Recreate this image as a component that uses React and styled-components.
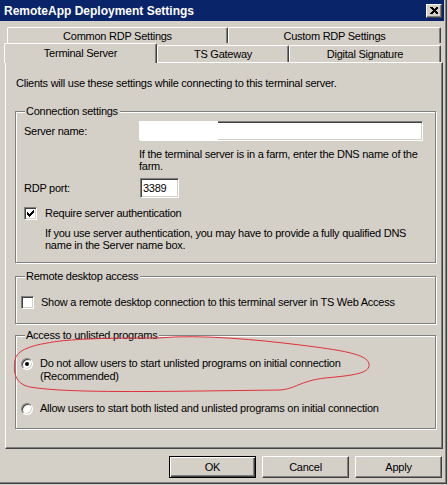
import styled, { createGlobalStyle } from 'styled-components';

const GlobalStyle = createGlobalStyle`
  html, body {
    margin: 0;
    background: #d4d0c8;
  }
  body {
    font-family: "Liberation Sans", Arial, sans-serif;
    font-size: 11px;
    letter-spacing: -0.25px;
    color: #000;
  }
`

const Window = styled.div`
  position: relative;
  box-sizing: border-box;
  width: 447px;
  height: 484px;
  background: #d4d0c8;
  border-right: 1px solid #404040;
  border-bottom: 1px solid #404040;
  box-shadow: inset -1px -1px #808080;
  display: flex;
  flex-direction: column;
`

const TitleBar = styled.div`
  width: 444px;
  height: 21px;
  box-sizing: border-box;
  background: #0a246a;
  display: flex;
  align-items: center;
  justify-content: space-between;
  padding: 0 2px 0 4px;
`

const Title = styled.span`
  color: #fff;
  font-weight: bold;
  font-size: 12px;
  letter-spacing: 0;
`

const CloseButton = styled.div`
  width: 16px;
  height: 14px;
  box-sizing: border-box;
  background: #d4d0c8;
  border: 1px solid;
  border-color: #fff #404040 #404040 #fff;
  box-shadow: inset -1px -1px #808080;
  display: flex;
  align-items: center;
  justify-content: center;
`

const Tabs = styled.div`
  margin-top: 6px;
  display: flex;
  flex-direction: column;
`

const TabRow = styled.div`
  display: flex;
  margin-left: ${p => p.$indent}px;
  height: ${p => p.$height}px;
  align-items: flex-end;
`

const Tab = styled.div`
  position: relative;
  box-sizing: border-box;
  width: ${p => p.$width}px;
  height: ${p => (p.$active ? 20 : p.$short ? 17 : 16)}px;
  margin-bottom: ${p => (p.$active ? -1 : 0)}px;
  z-index: ${p => (p.$active ? 2 : 1)};
  background: #d4d0c8;
  border-top: 1px solid #fff;
  border-left: 1px solid #fff;
  border-right: 1px solid #404040;
  border-top-left-radius: 2px;
  border-top-right-radius: 2px;
  box-shadow: inset -1px 0 #808080;
  display: flex;
  justify-content: center;
  padding-top: ${p => (p.$active ? 3 : 2)}px;
`

const Panel = styled.div`
  box-sizing: border-box;
  width: 438px;
  height: 387px;
  margin-left: 5px;
  border: 1px solid;
  border-color: #fff #404040 #404040 #fff;
  box-shadow: inset -1px -1px #808080;
  padding: 14px 5px 0 9px;
  display: flex;
  flex-direction: column;
`

const Intro = styled.div`
  line-height: 13px;
  margin-left: 1px;
`

const Group = styled.div`
  position: relative;
  box-sizing: border-box;
  width: 421px;
  height: ${p => p.$height}px;
  margin-top: ${p => p.$top}px;
  border: 1px solid #808080;
  box-shadow: inset 1px 1px #fff, 1px 1px #fff;
  padding: ${p => p.$pad};
  display: flex;
  flex-direction: column;
`

const Legend = styled.span`
  position: absolute;
  top: -7px;
  left: 9px;
  padding: 0 2px 0 1px;
  background: #d4d0c8;
  line-height: 13px;
`

const FieldRow = styled.div`
  display: flex;
  align-items: center;
  margin-top: ${p => p.$top || 0}px;
`

const FieldLabel = styled.span`
  width: ${p => p.$width}px;
  flex: none;
  line-height: 13px;
`

const TextBox = styled.div`
  position: relative;
  box-sizing: border-box;
  width: ${p => p.$width}px;
  height: 20px;
  background: #fff;
  border: 1px solid;
  border-color: #808080 #fff #fff #808080;
  box-shadow: inset 1px 1px #404040, inset -1px -1px #d4d0c8;
  padding: 3px 0 0 2px;
  line-height: 13px;
`

const Redacted = styled.span`
  position: absolute;
  left: -1px;
  top: -1px;
  width: 79px;
  height: 19px;
  background: #fff;
`

const Hint = styled.div`
  margin: ${p => p.$margin};
  line-height: 12px;
  white-space: nowrap;
`

const CheckRow = styled.div`
  display: flex;
  align-items: center;
  gap: ${p => p.$gap}px;
  margin-top: ${p => p.$top || 0}px;
  line-height: 13px;
  white-space: nowrap;
`

const CheckBox = styled.div`
  box-sizing: border-box;
  width: 13px;
  height: 13px;
  flex: none;
  background: #fff;
  border: 1px solid;
  border-color: #808080 #fff #fff #808080;
  box-shadow: inset 1px 1px #404040, inset -1px -1px #d4d0c8;
  display: flex;
  align-items: center;
  justify-content: center;
`

const RadioRow = styled.div`
  display: flex;
  align-items: flex-start;
  gap: 7px;
  margin-top: ${p => p.$top || 0}px;
  line-height: 13px;
  white-space: nowrap;
`

const Radio = styled.div`
  position: relative;
  box-sizing: border-box;
  width: 12px;
  height: 12px;
  flex: none;
  margin-top: 1px;
  border-radius: 50%;
  background: #fff;
  border: 1px solid;
  border-color: #808080 #fff #fff #808080;
  box-shadow: inset 1px 1px #404040, inset -1px -1px #d4d0c8;

  &::after {
    content: '';
    display: ${p => (p.$checked ? 'block' : 'none')};
    position: absolute;
    left: 3px;
    top: 3px;
    width: 4px;
    height: 4px;
    border-radius: 50%;
    background: #000;
  }
`

const ButtonBar = styled.div`
  display: flex;
  justify-content: flex-end;
  gap: 6px;
  margin-top: 7px;
  padding-right: 4px;
`

const Button = styled.div`
  box-sizing: border-box;
  width: 87px;
  height: 22px;
  background: #d4d0c8;
  border: 1px solid;
  border-color: ${p => (p.$default ? '#000' : '#fff #404040 #404040 #fff')};
  box-shadow: ${p =>
    p.$default
      ? 'inset 1px 1px #fff, inset -1px -1px #404040, inset -2px -2px #808080'
      : 'inset -1px -1px #808080'};
  display: flex;
  align-items: center;
  justify-content: center;
  line-height: 13px;
`

const Scribble = styled.svg`
  position: absolute;
  left: 0;
  top: 0;
  pointer-events: none;
`

function Check() {
  return (
    <svg width="7" height="7" viewBox="0 0 7 7" shapeRendering="crispEdges">
      <path d="M6 0h1v3h-1v1h-1v1h-1v1h-1v1h-1v-1h-1v-1h-1v-3h1v1h1v1h1v-1h1v-1h1v-1h1z" fill="#000" />
    </svg>
  )
}

export default function App() {
  return (
    <>
      <GlobalStyle />
      <Window>
        <TitleBar>
          <Title>RemoteApp Deployment Settings</Title>
          <CloseButton>
            <svg width="8" height="7" viewBox="0 0 8 7" shapeRendering="crispEdges">
              <path d="M0 0h2l2 2 2-2h2v1l-2.5 2.5L8 6v1H6L4 5 2 7H0V6l2.5-2.5L0 1z" fill="#000" />
            </svg>
          </CloseButton>
        </TitleBar>

        <Tabs>
          <TabRow $indent={7} $height={16}>
            <Tab $width={221}>Common RDP Settings</Tab>
            <Tab $width={213}>Custom RDP Settings</Tab>
          </TabRow>
          <TabRow $indent={4} $height={19}>
            <Tab $width={153} $active>Terminal Server</Tab>
            <Tab $width={132} $short>TS Gateway</Tab>
            <Tab $width={152} $short>Digital Signature</Tab>
          </TabRow>
        </Tabs>

        <Panel>
          <Intro>Clients will use these settings while connecting to this terminal server.</Intro>

          <Group $top={21} $height={152} $pad="9px 12px 0 8px">
            <Legend>Connection settings</Legend>
            <FieldRow>
              <FieldLabel $width={115}>Server name:</FieldLabel>
              <TextBox $width={285}><Redacted /></TextBox>
            </FieldRow>
            <Hint $margin="7px 0 0 115px">
              If the terminal server is in a farm, enter the DNS name of the<br />farm.
            </Hint>
            <FieldRow $top={6}>
              <FieldLabel $width={116}>RDP port:</FieldLabel>
              <TextBox $width={39}>3389</TextBox>
            </FieldRow>
            <CheckRow $gap={8} $top={9}>
              <CheckBox><Check /></CheckBox>
              <span>Require server authentication</span>
            </CheckRow>
            <Hint $margin="7px 0 0 21px">
              If you use server authentication, you may have to provide a fully qualified DNS<br />
              name in the Server name box.
            </Hint>
          </Group>

          <Group $top={13} $height={48} $pad="19px 0 0 5px">
            <Legend>Remote desktop access</Legend>
            <CheckRow $gap={7}>
              <CheckBox />
              <span>Show a remote desktop connection to this terminal server in TS Web Access</span>
            </CheckRow>
          </Group>

          <Group $top={11} $height={94} $pad="21px 0 0 5px">
            <Legend>Access to unlisted programs</Legend>
            <RadioRow>
              <Radio $checked />
              <span>Do not allow users to start unlisted programs on initial connection<br />(Recommended)</span>
            </RadioRow>
            <RadioRow $top={19}>
              <Radio />
              <span>Allow users to start both listed and unlisted programs on initial connection</span>
            </RadioRow>
          </Group>
        </Panel>

        <ButtonBar>
          <Button $default>OK</Button>
          <Button>Cancel</Button>
          <Button>Apply</Button>
        </ButtonBar>

        <Scribble width="447" height="484">
          <path
            d="M158 338 C 200 334, 260 340, 300 345 C 340 350, 368 354, 369 364 C 370 372, 360 375, 325 378 C 300 381, 295 389, 280 390 L 200 391 C 120 392, 60 392, 30 387 C 15 384, 13 372, 15 360 C 17 350, 30 345, 60 341 C 90 338, 120 338, 158 338 Z"
            fill="none"
            stroke="#e0303a"
            strokeWidth="1"
          />
        </Scribble>
      </Window>
    </>
  )
}
